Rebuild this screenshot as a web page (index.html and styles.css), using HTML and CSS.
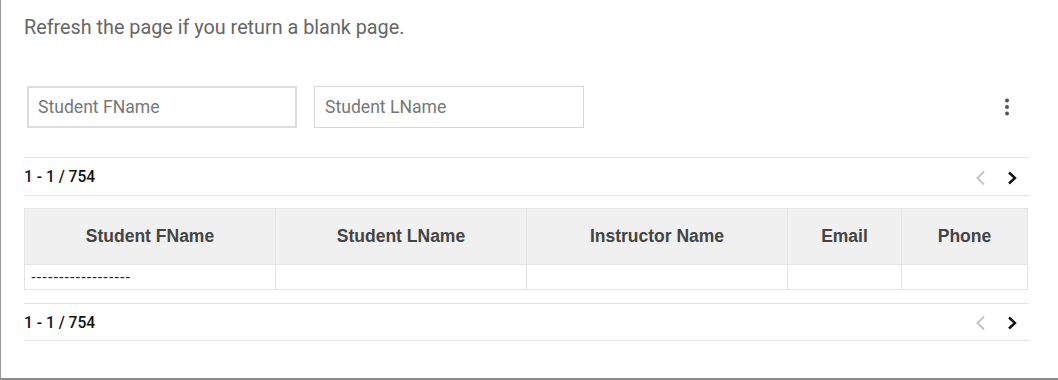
FILE: index.html
```html
<!DOCTYPE html>
<html>
	<head>
		<title>Students</title>
		<link rel="stylesheet" href="styles.css">
	</head>
	<body>
		<div class="page">
			<p class="note">Refresh the page if you return a blank page.</p>

			<div class="filters">
				<input class="field hover" type="text" placeholder="Student FName">
				<input class="field" type="text" placeholder="Student LName">
				<span class="spacer"></span>
				<svg class="more" width="24" height="24" viewBox="0 0 24 24">
					<circle cx="12" cy="5.5" r="2" fill="#555"/>
					<circle cx="12" cy="12" r="2" fill="#555"/>
					<circle cx="12" cy="18.5" r="2" fill="#555"/>
				</svg>
			</div>

			<div class="pager top">
				<span class="count">1 - 1 / 754</span>
				<span class="arrows">
					<svg width="14" height="16" viewBox="0 0 14 16"><path d="M10 1.5 L3.5 8 L10 14.5" fill="none" stroke="#c4c4c4" stroke-width="2"/></svg>
					<svg width="14" height="16" viewBox="0 0 14 16"><path d="M4 2.5 L10 8 L4 13.5" fill="none" stroke="#111" stroke-width="2.4"/></svg>
				</span>
			</div>

			<table class="grid">
				<thead>
					<tr>
						<th class="c1">Student FName</th>
						<th class="c2">Student LName</th>
						<th class="c3">Instructor Name</th>
						<th class="c4">Email</th>
						<th class="c5">Phone</th>
					</tr>
				</thead>
				<tbody>
					<tr>
						<td>------------------</td>
						<td></td>
						<td></td>
						<td></td>
						<td></td>
					</tr>
				</tbody>
			</table>

			<div class="pager bottom">
				<span class="count">1 - 1 / 754</span>
				<span class="arrows">
					<svg width="14" height="16" viewBox="0 0 14 16"><path d="M10 1.5 L3.5 8 L10 14.5" fill="none" stroke="#c4c4c4" stroke-width="2"/></svg>
					<svg width="14" height="16" viewBox="0 0 14 16"><path d="M4 2.5 L10 8 L4 13.5" fill="none" stroke="#111" stroke-width="2.4"/></svg>
				</span>
			</div>
		</div>
	</body>
</html>
```

FILE: styles.css
```css
html, body {
	margin: 0;
	padding: 0;
	background: #fff;
}

.page {
	box-sizing: border-box;
	width: 1058px;
	height: 380px;
	border-left: 1px solid #9a9a9a;
	border-bottom: 2px solid #8c8c8c;
	padding: 0 29px 0 23px;
	font-family: Roboto, "Liberation Sans", sans-serif;
}

.note {
	margin: 0;
	padding-top: 15px;
	font-size: 19.8px;
	line-height: 26px;
	color: #666;
}

.filters {
	display: flex;
	align-items: center;
	margin-top: 45px;
	padding-left: 3px;
	gap: 17px;
}

.field {
	box-sizing: border-box;
	width: 270px;
	height: 42px;
	border: 1px solid #d6d6d6;
	padding: 0 10px;
	font-family: Roboto, "Liberation Sans", sans-serif;
	font-size: 17.6px;
	color: #333;
	outline: none;
}

.field.hover {
	border: 2px solid #dcdcdc;
	padding-left: 9px;
}

.field::placeholder {
	color: #777;
}

.spacer {
	flex: 1;
}

.more {
	margin-right: 10px;
}

.pager {
	display: flex;
	align-items: center;
	justify-content: space-between;
	height: 37px;
	border-top: 1px solid #e3e3e3;
	border-bottom: 1px solid #e3e3e3;
}

.pager.top {
	margin-top: 29px;
}

.pager.bottom {
	height: 36px;
	margin-top: 13px;
}

.count {
	font-size: 15.6px;
	font-weight: 500;
	color: #111;
	padding-top: 1px;
}

.arrows {
	display: flex;
	gap: 17px;
	margin-right: 10px;
	padding-top: 2px;
}

.grid {
	width: 1004px;
	margin-top: 12px;
	border-collapse: collapse;
	table-layout: fixed;
	font-family: "Liberation Sans", Arial, sans-serif;
}

.grid th {
	height: 55px;
	padding: 0;
	background: #f0f0f0;
	border: 1px solid #e6e6e6;
	font-size: 17.5px;
	font-weight: bold;
	color: #444;
	text-align: center;
}

.grid td {
	height: 24px;
	padding: 0 6px;
	border: 1px solid #e3e3e3;
	font-size: 15px;
	line-height: 20px;
	letter-spacing: 0.55px;
	color: #222;
	white-space: nowrap;
	overflow: hidden;
}

.c1 { width: 250px; }
.c2 { width: 250px; }
.c3 { width: 260px; }
.c4 { width: 113px; }
```
